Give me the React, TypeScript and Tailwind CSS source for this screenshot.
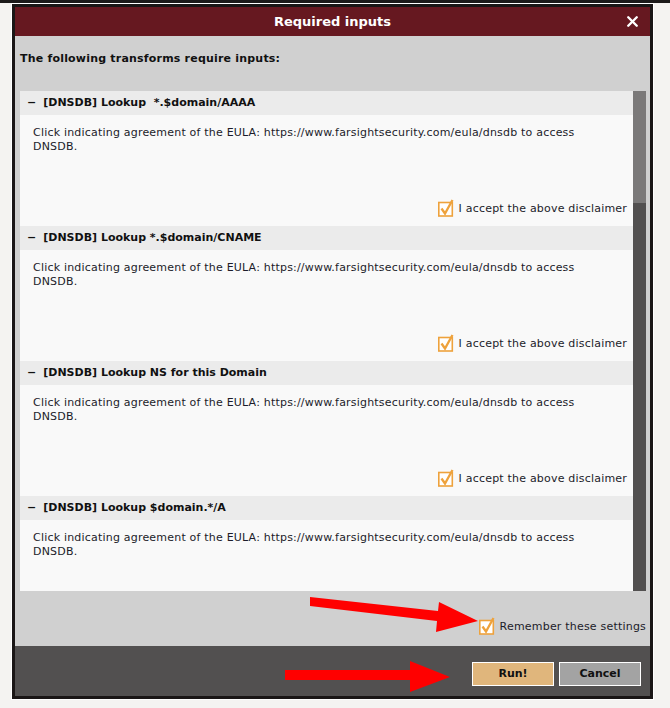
import { X } from "lucide-react";

// transforms shown in the dialog
const transforms = [
  "[DNSDB] Lookup  *.$domain/AAAA",
  "[DNSDB] Lookup *.$domain/CNAME",
  "[DNSDB] Lookup NS for this Domain",
  "[DNSDB] Lookup $domain.*/A",
];

function CheckBox() {
  return (
    <svg width="15" height="16" viewBox="0 0 15 16" className="shrink-0 overflow-visible">
      <rect x="0.8" y="1.5" width="13.5" height="13.5" fill="#ffffff" stroke="#eea23c" strokeWidth="1.6" />
      <path d="M3.5 7.5 L7 12.5 L14.5 -1" fill="none" stroke="#eea23c" strokeWidth="2.3" />
    </svg>
  );
}

function TransformSection({ title }: { title: string }) {
  return (
    <div className="h-[135px] shrink-0 flex flex-col">
      <div className="h-6 bg-[#ebebeb] flex items-center pl-[7px] font-bold text-[#111] whitespace-pre">
        <span className="mr-[7px]">−</span>
        {title}
      </div>
      <div className="flex-1 bg-[#f9f9f9] pl-[13px] pr-[6px] pt-[11px] pb-[9px] flex flex-col tracking-[0.2px]">
        <p className="leading-[14px] text-[#1c1c2a]">
          Click indicating agreement of the EULA: https://www.farsightsecurity.com/eula/dnsdb to access
          <br />
          DNSDB.
        </p>
        <div className="mt-auto flex items-center justify-end gap-[6px] text-[#1c1c2a]">
          <CheckBox />
          <span>I accept the above disclaimer</span>
        </div>
      </div>
    </div>
  );
}

export default function App() {
  return (
    <div
      className="relative w-[670px] h-[708px] bg-[#f4f3f1] text-[11px] overflow-hidden"
      style={{ fontFamily: '"DejaVu Sans", Verdana, sans-serif' }}
    >
      <div className="h-[3px] bg-[#1c1a1a]" />

      <div className="ml-[11px] w-[643px] border border-white">
        <div className="border-[3px] border-[#1a1616] flex flex-col">
          {/* Title bar */}
          <div className="h-[29px] bg-[#661820] flex items-center justify-center relative">
            <span className="text-white font-bold text-[13px]">Required inputs</span>
            <X className="absolute right-[9px] top-[6px] text-white" size={17} strokeWidth={3.4} />
          </div>

          {/* Body */}
          <div className="h-[610px] bg-[#d0d0d0] pl-[5px] pr-[4px] pt-[16px] flex flex-col">
            <p className="font-bold leading-[14px] text-[#111] tracking-[0.2px]">
              The following transforms require inputs:
            </p>

            <div className="mt-[25px] h-[500px] flex overflow-hidden">
              <div className="flex-1 flex flex-col overflow-hidden">
                {transforms.map((t) => (
                  <TransformSection key={t} title={t} />
                ))}
              </div>
              <div className="w-[13px] bg-[#525050] flex flex-col">
                <div className="h-[112px] bg-[#7b7979]" />
              </div>
            </div>

            <div className="mt-[28px] flex items-center justify-end gap-[6px] text-[#1c1c2a] tracking-[0.2px]">
              <CheckBox />
              <span className="whitespace-nowrap">Remember these settings</span>
            </div>
          </div>

          {/* Footer */}
          <div className="h-[50px] bg-[#525050] flex justify-end items-start pt-[16px] pr-[9px] gap-[5px]">
            <button className="w-[82px] h-6 bg-[#e0b67c] border border-white font-bold text-[#111]">Run!</button>
            <button className="w-[82px] h-6 bg-[#a3a3a3] border border-white font-bold text-[#111]">Cancel</button>
          </div>
        </div>
      </div>

      {/* annotation arrows */}
      <svg className="absolute top-0 left-0 pointer-events-none" width="670" height="708">
        <polygon
          points="310,597 438,611 439,602 478,621 436,632 437,621 310,606"
          fill="#ff0000"
        />
        <polygon points="285,670 410,670 410,661 450,677 410,692 410,680 285,680" fill="#ff0000" />
      </svg>
    </div>
  );
}
